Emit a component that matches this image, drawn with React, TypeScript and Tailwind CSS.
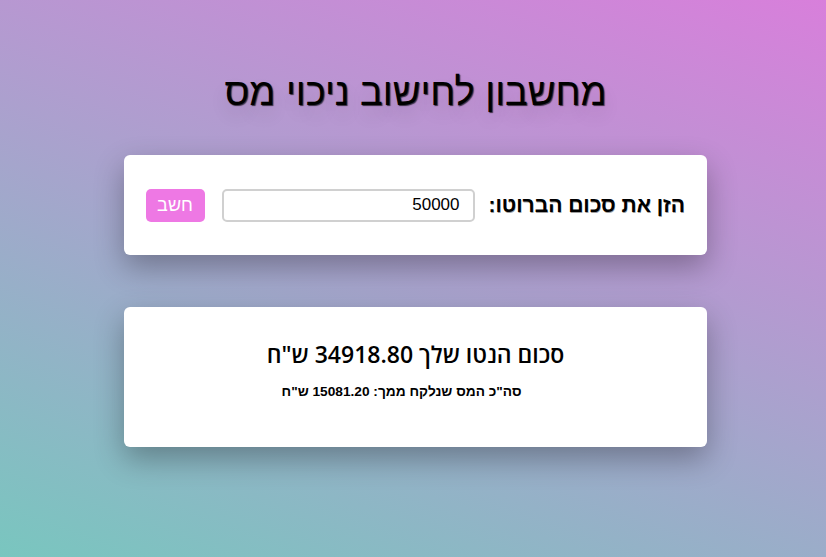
import React from "react";

export default function App() {
  return (
    <div
      dir="rtl"
      className="min-h-screen w-full bg-[linear-gradient(20deg,#79c6bf,#d87fdb)] flex flex-col items-center pl-[5px] font-['Liberation_Sans',Arial,sans-serif] text-black"
    >
      <h1 className="mt-[68px] text-[38px] leading-[48px] [text-shadow:1px_1px_1px_rgba(0,0,0,0.7),0_10px_18px_rgba(0,0,0,0.12)]">
        מחשבון לחישוב ניכוי מס
      </h1>

      <div className="mt-[39px] w-[583px] h-[100px] bg-white rounded-md shadow-[0_12px_30px_rgba(0,0,0,0.3)] flex items-center pr-[22px] pl-[22px]">
        <label className="shrink-0 text-[21px] font-bold whitespace-nowrap [text-shadow:0.5px_0.5px_0_rgba(0,0,0,0.4)]">הזן את סכום הברוטו:</label>
        <input
          type="text"
          defaultValue="50000"
          dir="rtl"
          className="shrink-0 mr-[14px] w-[253px] h-[33px] border-2 border-[#d0d0d0] rounded-[5px] px-[13px] text-[17px] text-right outline-none font-['Liberation_Sans',Arial,sans-serif]"
        />
        <button className="shrink-0 mr-[17px] w-[59px] h-[33px] bg-[#ee78e4] text-white rounded-[5px] text-[18px]">
          חשב
        </button>
      </div>

      <div className="mt-[52px] w-[583px] h-[140px] bg-white rounded-md shadow-[0_12px_30px_rgba(0,0,0,0.3)] flex flex-col items-center justify-center">
        <div className="text-[23px] leading-[30px] -mt-[12px] font-semibold font-['Open_Sans',sans-serif]">סכום הנטו שלך 34918.80 ש"ח</div>
        <div className="mt-[13px] pr-[28px] text-[13.7px] font-bold">סה"כ המס שנלקח ממך: 15081.20 ש"ח</div>
      </div>
    </div>
  );
}
